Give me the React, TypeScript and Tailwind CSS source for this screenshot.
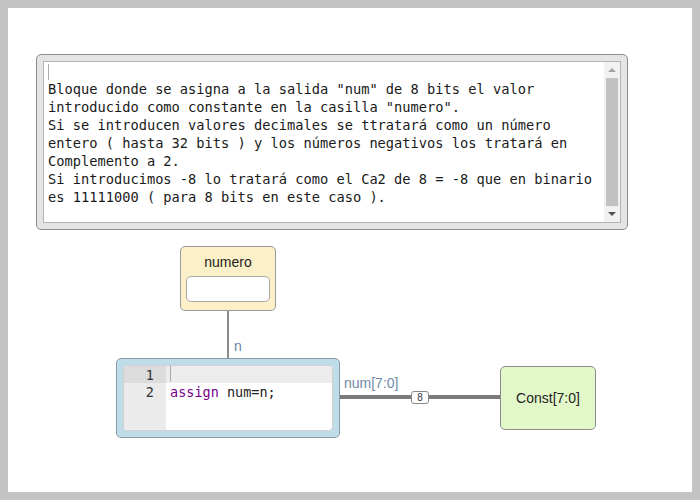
const docLines = [
  "",
  'Bloque donde se asigna a la salida "num" de 8 bits el valor',
  'introducido como constante en la casilla "numero".',
  "Si se introducen valores decimales se ttratará como un número",
  "entero ( hasta 32 bits ) y los números negativos los tratará en",
  "Complemento a 2.",
  "Si introducimos -8 lo tratará como el Ca2 de 8 = -8 que en binario",
  "es 11111000 ( para 8 bits en este caso ).",
];

const mono = "font-['DejaVu_Sans_Mono',monospace]";
const sans = "font-['Liberation_Sans',Arial,sans-serif]";

function DocBox() {
  return (
    <div className="ml-[28px] mt-[46px] w-[592px] h-[176px] rounded-[5px] border border-[#8c8c8c] bg-[#e4e4e4] p-[6px]">
      <div className="flex h-full border border-[#b4b4b4] bg-white">
        <div className={`flex-1 pl-[4px] ${mono} text-[13.7px] leading-[18px] text-[#1a1a1a]`}>
          {docLines.map((l, i) => (
            <div key={i} className="h-[18px] whitespace-pre">
              {i === 0 ? <span className="inline-block w-px h-[16px] mt-[2px] bg-[#aaa]" /> : l}
            </div>
          ))}
        </div>
        <div className="flex w-[16px] flex-col items-center bg-[#f1f1f1]">
          <div className="flex h-[16px] items-center justify-center">
            <div className="h-0 w-0 border-x-[4px] border-b-[4px] border-x-transparent border-b-[#a3a3a3]" />
          </div>
          <div className="w-[12px] flex-1 bg-[#c1c1c1]" />
          <div className="flex h-[16px] items-center justify-center">
            <div className="h-0 w-0 border-x-[4px] border-t-[4px] border-x-transparent border-t-[#505050]" />
          </div>
        </div>
      </div>
    </div>
  );
}

function Diagram() {
  return (
    <div className={`relative flex-1 ${sans}`}>
      {/* wires */}
      <div className="absolute left-[219px] top-[80px] h-[48px] w-[2px] bg-[#8a8a8a]" />
      <div className="absolute left-[331px] top-[165px] h-[4px] w-[162px] bg-[#7a7a7a]" />

      {/* labels */}
      <div className="absolute left-[226px] top-[107px] text-[14px] leading-[18px] text-[#6a86a6]">n</div>
      <div className="absolute left-[336px] top-[144px] text-[14px] leading-[18px] text-[#6f8aa8]">num[7:0]</div>
      <div className="absolute left-[403px] top-[161px] flex h-[13px] w-[18px] items-center justify-center rounded-[3px] border border-[#888] bg-white text-[10px] leading-none text-[#334]">
        8
      </div>

      {/* numero input block */}
      <div className="absolute left-[172px] top-[16px] flex h-[65px] w-[96px] flex-col items-center rounded-[5px] border border-[#9a9a9a] bg-[#fcf0c8]">
        <div className="mt-[6px] text-[14px] leading-[18px] text-[#222]">numero</div>
        <div className="mt-[5px] h-[26px] w-[84px] rounded-[5px] border border-[#a8a8a8] bg-white" />
      </div>

      {/* code block */}
      <div className="absolute left-[108px] top-[128px] h-[80px] w-[224px] rounded-[5px] border border-[#8a9aa2] bg-[#bedde9] p-[6px]">
        <div className={`flex h-full overflow-hidden rounded-[4px] border border-[#d0d0d0] bg-white ${mono} text-[13.5px] leading-[18px]`}>
          <div className="w-[42px] bg-[#ebebeb] text-right text-[#333]">
            <div className="h-[17px] bg-[#dcdcdc] pr-[12px]">1</div>
            <div className="h-[18px] pr-[12px]">2</div>
          </div>
          <div className="flex-1">
            <div className="h-[17px] bg-[#ececec] pl-[4px]">
              <span className="inline-block h-[16px] w-px bg-[#aaa]" />
            </div>
            <div className="h-[18px] whitespace-pre pl-[4px] text-[#222]">
              <span className="text-[#770088]">assign</span> num=n;
            </div>
          </div>
        </div>
      </div>

      {/* const block */}
      <div className="absolute left-[492px] top-[136px] flex h-[64px] w-[96px] items-center justify-center rounded-[5px] border border-[#8c8c8c] bg-[#e2f8c9] text-[14px] text-[#222]">
        Const[7:0]
      </div>
    </div>
  );
}

export default function App() {
  return (
    <div className="h-[500px] w-[700px] bg-[#c3c3c3] p-[8px]">
      <div className="flex h-full flex-col bg-white">
        <DocBox />
        <Diagram />
      </div>
    </div>
  );
}
